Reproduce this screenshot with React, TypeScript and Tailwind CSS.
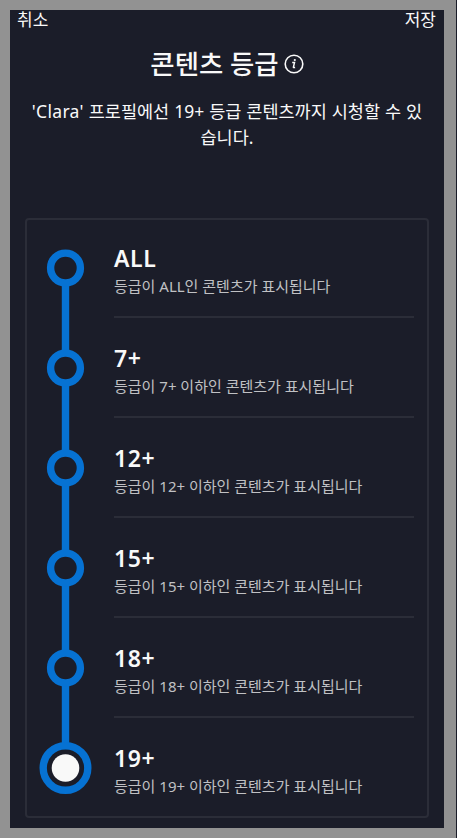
type Rating = {
  label: string;
  description: string;
};

const ratings: Rating[] = [
  { label: "ALL", description: "등급이 ALL인 콘텐츠가 표시됩니다" },
  { label: "7+", description: "등급이 7+ 이하인 콘텐츠가 표시됩니다" },
  { label: "12+", description: "등급이 12+ 이하인 콘텐츠가 표시됩니다" },
  { label: "15+", description: "등급이 15+ 이하인 콘텐츠가 표시됩니다" },
  { label: "18+", description: "등급이 18+ 이하인 콘텐츠가 표시됩니다" },
  { label: "19+", description: "등급이 19+ 이하인 콘텐츠가 표시됩니다" },
];

type RatingRowProps = {
  item: Rating;
  first: boolean;
  last: boolean;
};

function RatingRow({ item, first, last }: RatingRowProps) {
  return (
    <li className={`flex h-[100px] ${first ? "-mt-0.5" : ""}`}>
      <svg className="w-[87px] h-[100px] shrink-0" viewBox="0 0 87 100">
        {last ? (
          <>
            <path d="M38.5 0V26" stroke="#0672d3" strokeWidth="7.4" />
            <circle cx="38.5" cy="50" r="22.3" fill="#1b1d29" stroke="#0672d3" strokeWidth="7.4" />
            <circle cx="38.5" cy="50" r="13.8" fill="#f9f9f9" />
          </>
        ) : (
          <>
            <path
              d={first ? "M38.5 66V100" : "M38.5 0V34M38.5 66V100"}
              stroke="#0672d3"
              strokeWidth="7.4"
            />
            <circle cx="38.5" cy="50" r="14.9" fill="none" stroke="#0672d3" strokeWidth="7.4" />
          </>
        )}
      </svg>
      <div
        className={`w-[300px] pt-[25px] ${last ? "" : "border-b-2 border-[#2b2d38]"}`}
      >
        <h2 className="text-[23px] leading-[30px] font-semibold tracking-[0.6px] text-[#f9f9f9] whitespace-nowrap">
          {item.label}
        </h2>
        <p className="text-[15px] leading-[26px] text-[#c0c1c4] whitespace-nowrap">
          {item.description}
        </p>
      </div>
    </li>
  );
}

export default function App() {
  return (
    <div className="w-[457px] h-[838px] bg-[#929292] border-r border-[#1b1d29] pt-[10px] pl-[10px] font-['Noto_Sans','Noto_Sans_CJK_KR',sans-serif]">
      <main className="w-[434px] h-[818px] bg-[#1b1d29] text-[#f9f9f9]">
        <header className="flex justify-between h-[20px] pl-[7px] pr-2 text-[17px] leading-[18px]">
          <button>취소</button>
          <button>저장</button>
        </header>
        <div className="flex items-center justify-center gap-[5px] h-[40px] mt-[15px]">
          <h1 className="text-[26.4px] font-medium">콘텐츠 등급</h1>
          <svg className="w-5 h-5 -mt-0.5" viewBox="0 0 20 20" fill="none" stroke="#f9f9f9">
            <circle cx="10" cy="10" r="8.8" strokeWidth="1.6" />
            <path d="M8.2 8.6H10.5L9.4 13.2Q9.3 13.8 11.1 13.4" strokeWidth="1.5" />
            <circle cx="10.8" cy="6" r="1.1" fill="#f9f9f9" stroke="none" />
          </svg>
        </div>
        <p className="mt-[13px] text-center text-[17.5px] leading-[26px] [word-spacing:0.4px] whitespace-nowrap">
          <span className="tracking-[0.3px]">'Clara'</span> 프로필에선 19+ 등급 콘텐츠까지
          시청할 수 있
          <br />
          습니다.
        </p>
        <ul className="ml-[15px] mt-[68px] w-[404px] h-[600px] border-2 border-[#2b2d38] rounded">
          {ratings.map((item, i) => (
            <RatingRow
              key={item.label}
              item={item}
              first={i === 0}
              last={i === ratings.length - 1}
            />
          ))}
        </ul>
      </main>
    </div>
  );
}
